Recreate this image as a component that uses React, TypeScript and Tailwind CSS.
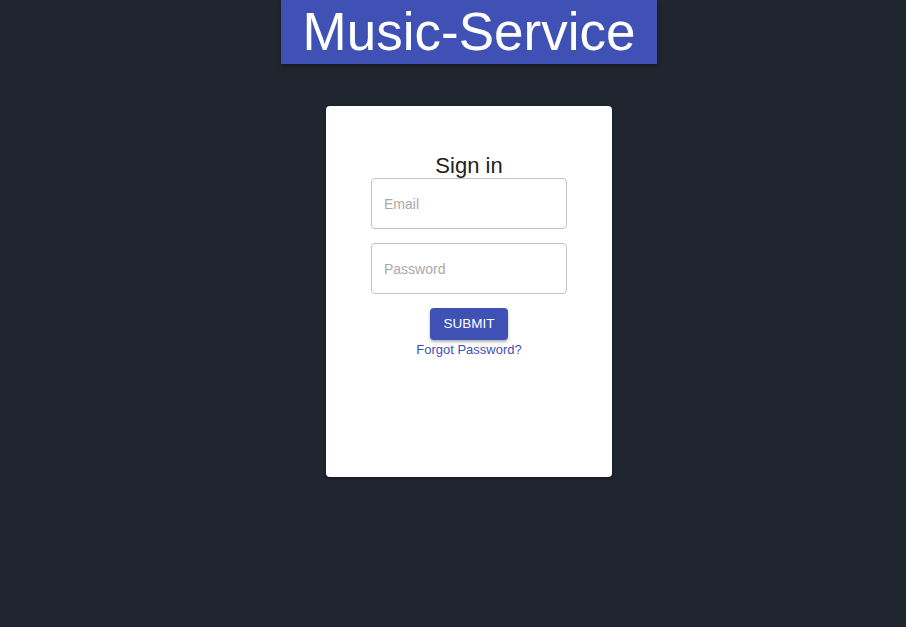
import React, { useState } from "react";

export default function App() {
  const [email, setEmail] = useState("");
  const [password, setPassword] = useState("");

  return (
    <div
      className="min-h-screen w-full bg-[#20262f] flex flex-col items-center pl-[32px]"
      style={{ fontFamily: '"Liberation Sans", Arial, sans-serif' }}
    >
      {/* Header */}
      <h1 className="bg-[#3f51b5] text-white text-[53px] leading-[63px] h-[64px] px-[22px] shadow-[0_2px_4px_rgba(0,0,0,0.35)]">
        Music-Service
      </h1>

      {/* Card */}
      <div className="mt-[42px] w-[286px] h-[371px] bg-white rounded-[4px] shadow-[0_1px_3px_rgba(0,0,0,0.4)] flex flex-col items-center pt-[47px]">
        <h2 className="text-[22px] leading-[25px] text-[#222]">Sign in</h2>
        <form
          className="flex flex-col items-center"
          onSubmit={(e) => e.preventDefault()}
        >
          <input
            type="email"
            placeholder="Email"
            value={email}
            onChange={(e) => setEmail(e.target.value)}
            className="w-[196px] h-[51px] border border-[#c4c4c4] rounded-[4px] px-[12px] text-[14px] text-[#222] placeholder:text-[#a9a9a9] outline-none"
          />
          <input
            type="password"
            placeholder="Password"
            value={password}
            onChange={(e) => setPassword(e.target.value)}
            className="mt-[14px] w-[196px] h-[51px] border border-[#c4c4c4] rounded-[4px] px-[12px] text-[14px] text-[#222] placeholder:text-[#a9a9a9] outline-none"
          />
          <button
            type="submit"
            className="mt-[14px] w-[78px] h-[32px] bg-[#3f51b5] text-white text-[13.5px] rounded-[4px] shadow-[0_2px_3px_rgba(0,0,0,0.3)]"
          >
            SUBMIT
          </button>
          <a href="#" className="mt-[1px] text-[13px] leading-[17px] text-[#3f51b5]">
            Forgot Password?
          </a>
        </form>
      </div>
    </div>
  );
}
